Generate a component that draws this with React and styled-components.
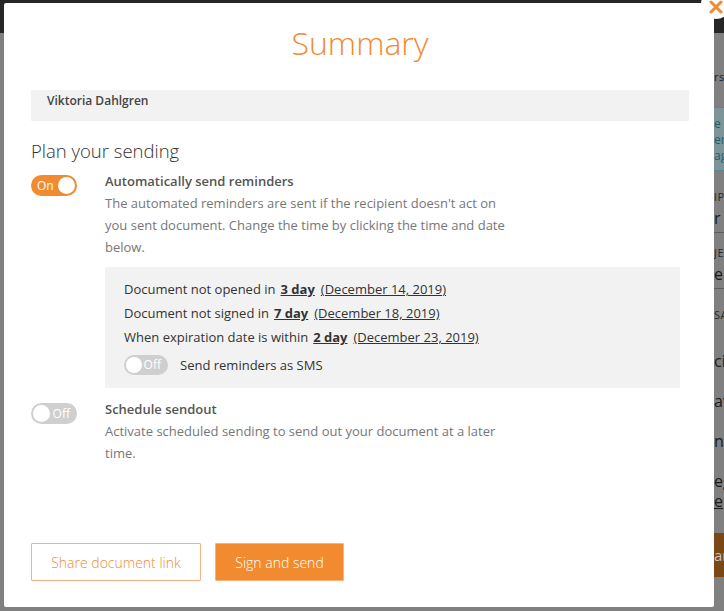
import React from "react";
import styled, { createGlobalStyle } from "styled-components";

const Global = createGlobalStyle`
  html, body { margin: 0; padding: 0; }
  body {
    font-family: "Open Sans", "Noto Sans", sans-serif;
    background: #808080;
    width: 724px;
    height: 611px;
    overflow: hidden;
  }
  * { box-sizing: border-box; }
`;

const ORANGE = "#f28a30";

/* ---------- background page (dimmed by overlay) ---------- */
const Page = styled.div`
  position: relative;
  width: 724px;
  height: 611px;
  display: flex;
  flex-direction: column;
  background: #808080;
  overflow: hidden;
`;

const TopBar = styled.div`
  height: 33px;
  background: #262626;
  flex-shrink: 0;
`;

const PageBody = styled.div`
  flex: 1;
  display: flex;
  position: relative;
`;

const Spacer = styled.div`
  width: 714px;
  flex-shrink: 0;
  display: flex;
  flex-direction: column;
  justify-content: flex-end;
`;

const Powered = styled.div`
  font-size: 12px;
  line-height: 16px;
  color: #2a2a2a;
  padding-left: 170px;
  margin-bottom: -14px;
  & b { color: #7a4a1a; font-weight: 600; }
`;

const SidePanel = styled.div`
  width: 300px;
  display: flex;
  flex-direction: column;
  color: #1e1e1e;
  padding-top: 36px;
`;

const SideSmall = styled.div`
  font-size: 11px;
  line-height: 16px;
  color: ${(p) => p.$c || "#1e1e1e"};
  margin-top: ${(p) => p.$mt || 0}px;
  letter-spacing: 0.5px;
`;

const SideBig = styled.div`
  font-size: 16px;
  line-height: 20px;
  margin-top: ${(p) => p.$mt || 0}px;
  color: #1a1a1a;
  padding-bottom: ${(p) => (p.$line ? 4 : 0)}px;
  border-bottom: ${(p) => (p.$line ? "1px solid #5e5e5e" : "none")};
  text-decoration: ${(p) => (p.$u ? "underline" : "none")};
`;

const SideInfo = styled.div`
  margin-top: 22px;
  padding: 8px 0 6px;
  background: #7d9499;
  border-top: 1px solid #5a8891;
  border-bottom: 1px solid #5a8891;
  color: #1f5e6b;
  font-size: 12px;
  line-height: 16px;
`;

const SideButton = styled.div`
  margin-top: ${(p) => p.$mt || 0}px;
  height: 44px;
  background: #7a4817;
  color: #cfc2b5;
  font-size: 15px;
  display: flex;
  align-items: center;
`;

/* ---------- modal ---------- */
const Modal = styled.div`
  position: absolute;
  left: 4px;
  top: 3px;
  width: 710px;
  height: 604px;
  background: #fff;
  border-radius: 2px;
  display: flex;
  flex-direction: column;
  padding: 20px 25px 26px 27px;
`;

const Close = styled.button`
  position: absolute;
  right: -17px;
  top: -14px;
  width: 30px;
  height: 30px;
  border-radius: 50%;
  background: #fff;
  border: none;
  padding: 0;
  display: flex;
  align-items: center;
  justify-content: center;
  & svg { margin-top: 6px; margin-left: -1px; }
`;

const Title = styled.h1`
  margin: 0;
  text-align: center;
  font-weight: 300;
  font-size: 32px;
  line-height: 40px;
  color: ${ORANGE};
`;

const NameBox = styled.div`
  margin-top: 27px;
  height: 31px;
  background: #f2f2f2;
  padding: 3px 16px 0;
  font-size: 12px;
  line-height: 16px;
  font-weight: 600;
  color: #444;
`;

const SectionTitle = styled.h2`
  margin: 18px 0 0;
  font-size: 18.5px;
  line-height: 24px;
  font-weight: 300;
  color: #333;
`;

const OptionRow = styled.div`
  display: flex;
  margin-top: ${(p) => p.$mt}px;
`;

const ToggleCol = styled.div`
  width: 74px;
  flex-shrink: 0;
  padding-top: 5px;
`;

const OptionBody = styled.div`
  display: flex;
  flex-direction: column;
`;

const OptionHeading = styled.div`
  font-size: 13px;
  line-height: 22px;
  font-weight: 600;
  color: #555;
`;

const OptionText = styled.div`
  font-size: 13px;
  line-height: 22px;
  color: #777;
  max-width: 410px;
`;

const Track = styled.div`
  position: relative;
  width: ${(p) => p.$w}px;
  height: ${(p) => p.$h}px;
  border-radius: 12px;
  background: ${(p) => (p.$on ? ORANGE : "#cfcfcf")};
  display: flex;
  align-items: center;
  justify-content: ${(p) => (p.$on ? "flex-start" : "flex-end")};
  padding: 0 ${(p) => (p.$on ? 0 : 7)}px 0 ${(p) => (p.$on ? 6 : 0)}px;
  color: #fff;
  font-size: 12px;
  line-height: 1;
`;

const Knob = styled.span`
  position: absolute;
  top: 2px;
  ${(p) => (p.$on ? "right: 2px;" : "left: 2px;")}
  width: ${(p) => p.$s}px;
  height: ${(p) => p.$s}px;
  border-radius: 50%;
  background: #fff;
`;

const Toggle = ({ on, w = 46, h = 21 }) => (
  <Track $on={on} $w={w} $h={h}>
    {on ? "On" : "Off"}
    <Knob $on={on} $s={h - 4} />
  </Track>
);

const ReminderBox = styled.div`
  margin-top: 9px;
  width: 575px;
  background: #f2f2f2;
  padding: 10px 19px 13px;
  display: flex;
  flex-direction: column;
`;

const ReminderLine = styled.div`
  font-size: 13px;
  line-height: 24px;
  color: #333;
  white-space: nowrap;
`;

const Days = styled.span`
  font-weight: 700;
  text-decoration: underline;
  margin: 0 6px 0 5px;
`;

const DateLink = styled.span`
  text-decoration: underline;
`;

const SmsRow = styled.div`
  display: flex;
  align-items: center;
  gap: 12px;
  margin-top: 6px;
  font-size: 13px;
  color: #333;
`;

const Actions = styled.div`
  margin-top: auto;
  display: flex;
  gap: 14px;
`;

const Button = styled.button`
  height: 38px;
  width: ${(p) => p.$w}px;
  font-family: "Open Sans", sans-serif;
  font-size: 14px;
  font-weight: 300;
  border-radius: 1px;
  cursor: pointer;
  border: 1px solid #f5b283;
  background: ${(p) => (p.$primary ? ORANGE : "#fff")};
  color: ${(p) => (p.$primary ? "#fff" : ORANGE)};
  padding: 0;
`;

export default function App() {
  return (
    <>
      <Global />
      <Page>
        <TopBar />
        <PageBody>
          <Spacer>
            <Powered>
              Powered by <b>Scrive</b>
            </Powered>
          </Spacer>
          <SidePanel>
            <SideSmall>rs</SideSmall>
            <SideInfo>
              e<br />er<br />ag
            </SideInfo>
            <SideSmall $mt={18} $c="#2a2a2a">IPI</SideSmall>
            <SideBig $mt={3} $line>r</SideBig>
            <SideSmall $mt={12} $c="#2a2a2a">JE</SideSmall>
            <SideBig $mt={3} $line>e</SideBig>
            <SideSmall $mt={18} $c="#2a2a2a">SA</SideSmall>
            <SideBig $mt={28}>ci</SideBig>
            <SideBig $mt={20}>av</SideBig>
            <SideBig $mt={20}>ne</SideBig>
            <SideBig $mt={20}>eg</SideBig>
            <SideBig $u>e</SideBig>
            <SideButton $mt={22}>ar</SideButton>
          </SidePanel>
        </PageBody>

        <Modal>
          <Close aria-label="Close">
            <svg width="14" height="14" viewBox="0 0 14 14">
              <path d="M2 2 L12 12 M12 2 L2 12" stroke={ORANGE} strokeWidth="3" strokeLinecap="round" />
            </svg>
          </Close>
          <Title>Summary</Title>
          <NameBox>Viktoria Dahlgren</NameBox>
          <SectionTitle>Plan your sending</SectionTitle>

          <OptionRow $mt={7}>
            <ToggleCol>
              <Toggle on />
            </ToggleCol>
            <OptionBody>
              <OptionHeading>Automatically send reminders</OptionHeading>
              <OptionText>
                The automated reminders are sent if the recipient doesn't act on you sent
                document. Change the time by clicking the time and date below.
              </OptionText>
              <ReminderBox>
                <ReminderLine>
                  Document not opened in<Days>3 day</Days>
                  <DateLink>(December 14, 2019)</DateLink>
                </ReminderLine>
                <ReminderLine>
                  Document not signed in<Days>7 day</Days>
                  <DateLink>(December 18, 2019)</DateLink>
                </ReminderLine>
                <ReminderLine>
                  When expiration date is within<Days>2 day</Days>
                  <DateLink>(December 23, 2019)</DateLink>
                </ReminderLine>
                <SmsRow>
                  <Toggle w={44} h={20} />
                  Send reminders as SMS
                </SmsRow>
              </ReminderBox>
            </OptionBody>
          </OptionRow>

          <OptionRow $mt={10}>
            <ToggleCol>
              <Toggle />
            </ToggleCol>
            <OptionBody>
              <OptionHeading>Schedule sendout</OptionHeading>
              <OptionText>
                Activate scheduled sending to send out your document at a later time.
              </OptionText>
            </OptionBody>
          </OptionRow>

          <Actions>
            <Button $w={170}>Share document link</Button>
            <Button $w={129} $primary>
              Sign and send
            </Button>
          </Actions>
        </Modal>
      </Page>
    </>
  );
}
